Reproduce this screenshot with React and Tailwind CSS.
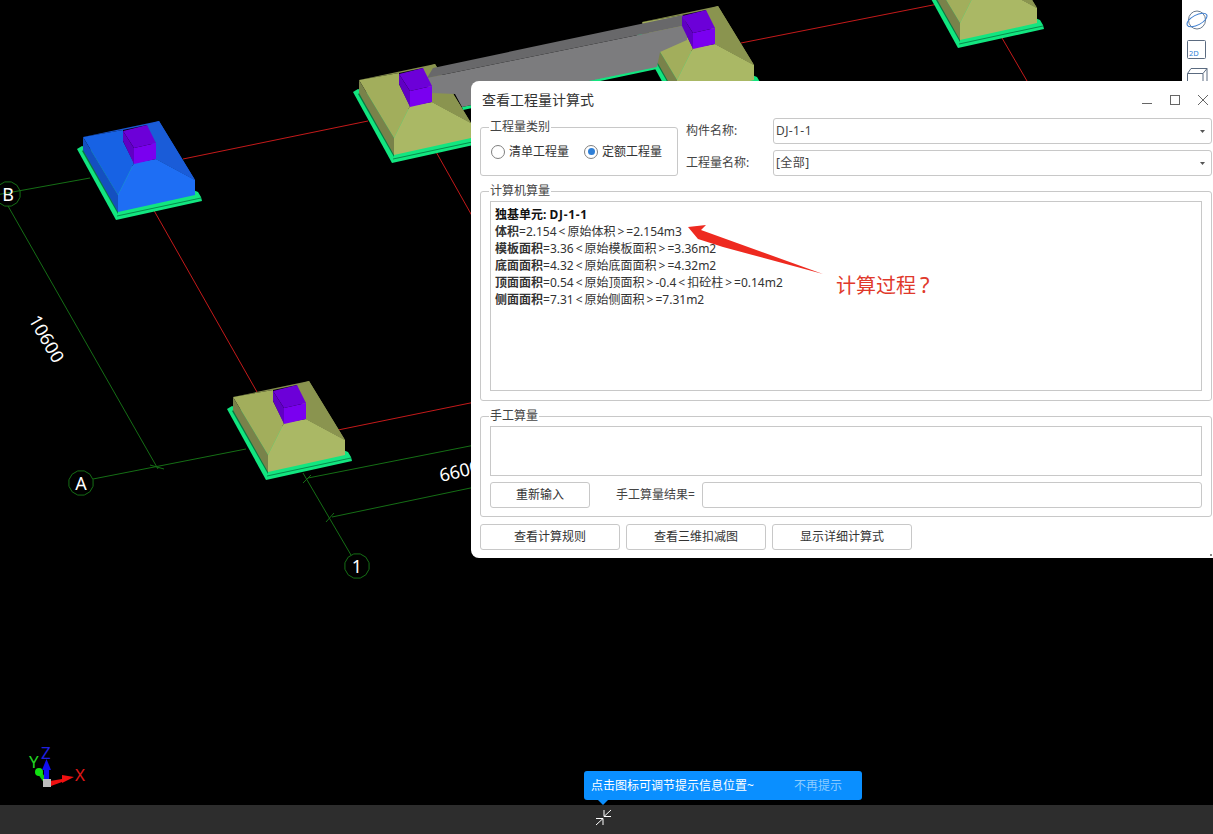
const font = { fontFamily: '"Noto Sans", "Noto Sans CJK SC", sans-serif' };

const BLUE = { back: "#1a58d4", left: "#1762e4", right: "#1a5cd8", front: "#1e6ef4", edge: "#1450c0" };
const OLIVE = { back: "#858e4e", left: "#a2ae5c", right: "#8a944f", front: "#aab865", edge: "#79824a" };

const Plate = ({ x, y }) => (
  <g transform={`translate(${x} ${y})`}>
    <polygon points="77,149 82,146 198,192 201,197 202,201 116,220" fill="#12e680" />
    <polygon points="82,151 85,149 118,208 118,214" fill="#067a42" />
    <polygon points="117,215.5 201,197.5 201,198.5 117,216.5" fill="#088a4c" />
  </g>
);

const Body = ({ x, y, c }) => (
  <g transform={`translate(${x} ${y})`}>
    <polygon points="83,137 159,121 195,180 156,159 147,125 123,130" fill={c.back} />
    <polygon points="83,137 123,130 123,141 134,163 118,195" fill={c.left} />
    <polygon points="147,125 159,121 195,180 156,159" fill={c.right} />
    <polygon points="134,163 156,159 195,180 195,195 118,212 118,195" fill={c.front} />
    <polygon points="83,137 118,195 118,212 83,150" fill={c.edge} />
  </g>
);

const Column = ({ x, y }) => (
  <g transform={`translate(${x} ${y})`}>
    <polygon points="123,131 147,125 156,143 134,148" fill="#6c00d8" />
    <polygon points="123,131 134,148 134,164 123,141" fill="#6000c4" />
    <polygon points="134,148 156,143 156,159 134,164" fill="#7a00f0" />
  </g>
);

const Label = ({ x, y, children }) => {
  const points = Array.from({ length: 12 }, (_, i) => {
    const a = ((i + 0.5) * Math.PI) / 6;
    return `${x + 12.5 * Math.cos(a)},${y + 12.5 * Math.sin(a)}`;
  }).join(" ");
  return (
    <g>
      <polygon points={points} fill="none" stroke="#156e15" />
      <text x={x} y={y + 6.5} fill="#fff" fontSize="18" textAnchor="middle" style={font}>
        {children}
      </text>
    </g>
  );
};

const footings = [
  { x: 0, y: 0, c: BLUE },
  { x: 150, y: 260, c: OLIVE },
  { x: 276, y: -57, c: OLIVE },
  { x: 559, y: -115, c: OLIVE },
  { x: 842, y: -172, c: OLIVE },
];

const Scene = () => (
  <svg width="1213" height="805" className="block">
    {/* axis lines */}
    <g stroke="#c41a1a" strokeWidth="1" fill="none">
      <line x1="152" y1="207" x2="257" y2="392" />
      <line x1="183" y1="159" x2="368" y2="121" />
      <line x1="338" y1="430" x2="480" y2="401" />
      <line x1="435" y1="150" x2="480" y2="230" />
      <line x1="741" y1="43" x2="938" y2="4" />
      <line x1="1002" y1="38" x2="1027" y2="81" />
    </g>
    <g stroke="#156e15" strokeWidth="1" fill="none">
      <line x1="-4" y1="195" x2="90" y2="178" />
      <line x1="93" y1="479" x2="246" y2="449" />
      <line x1="8" y1="206" x2="158" y2="469" />
      <line x1="150" y1="465" x2="164" y2="469" />
      <line x1="308" y1="478" x2="480" y2="444" />
      <line x1="332" y1="517" x2="480" y2="486" />
      <line x1="303" y1="473" x2="351" y2="555" />
      <line x1="303" y1="483" x2="311" y2="475" />
      <line x1="326" y1="522" x2="334" y2="513" />
    </g>
    {footings.map((f) => (
      <Plate key={f.x} x={f.x} y={f.y} />
    ))}
    {footings.map((f) => (
      <Body key={f.x} {...f} />
    ))}
    {/* beam sits over the two footings but under their columns */}
    <polygon points="462,107 657,66 657,69 463,110" fill="#12e680" />
    <polygon points="427,78 687,25 687,40 660,52 657,67 462,107 455,94 432,93" fill="#7c7c7e" />
    <polygon points="433,68 683,15 687,25 427,78" fill="#68686a" />
    {footings.map((f) => (
      <Column key={f.x} x={f.x} y={f.y} />
    ))}
    <Label x={8} y={194}>B</Label>
    <Label x={81} y={483}>A</Label>
    <Label x={357} y={566}>1</Label>
    <text x="0" y="0" fill="#fff" fontSize="18" textAnchor="middle" transform="translate(41 342) rotate(60)" style={font}>
      10600
    </text>
    <text x="0" y="0" fill="#fff" fontSize="18" transform="translate(441 482) rotate(-13)" style={font}>
      6600
    </text>
    {/* xyz gizmo */}
    <g>
      <text x="29" y="768" fill="#22d422" fontSize="17" style={font}>Y</text>
      <text x="41" y="759" fill="#2020e0" fontSize="17" style={font}>Z</text>
      <text x="75" y="781" fill="#e01818" fontSize="17" style={font}>X</text>
      <line x1="46" y1="782" x2="39" y2="772" stroke="#10c810" strokeWidth="4" />
      <circle cx="39" cy="772" r="4" fill="#10e010" />
      <rect x="44" y="765" width="5" height="16" fill="#1010f0" />
      <polygon points="46.5,759 51,770 42,770" fill="#1010f0" />
      <polygon points="50,781 62,779 62,775 74,777 62,783 62,782 51,786" fill="#f01010" />
      <rect x="43" y="779" width="8" height="8" fill="#bdbdbd" />
    </g>
  </svg>
);

const Toolbar = () => (
  <div className="absolute right-0 top-0 h-[81px] w-[31px] bg-white">
    <svg width="31" height="81" fill="none" className="block">
      <ellipse cx="15" cy="20" rx="8.5" ry="9" stroke="#6b7a8c" />
      <ellipse cx="15" cy="20" rx="11" ry="5" stroke="#3f7fd0" transform="rotate(-28 15 20)" />
      <rect x="5.5" y="40.5" width="18" height="18" rx="1" stroke="#5b6b80" />
      <text x="7" y="56" fill="#2f7fd6" fontSize="7.5" style={font}>2D</text>
      <path d="M5.5 81V73.5L9 68.5H25V81M5.5 73.5H21V81M21 73.5L25 68.5" stroke="#5b6b80" />
    </svg>
  </div>
);

const Group = ({ title, className, children }) => (
  <div className={`relative rounded-[3px] border border-[#c8c8c8] ${className}`}>
    <span className="absolute left-[8px] top-[-10px] bg-white px-px text-xs leading-[18px] text-[#444]">{title}</span>
    {children}
  </div>
);

const Radio = ({ checked, children }) => (
  <label className="flex items-center gap-[4px] text-xs text-[#333]">
    <span className="flex size-[14px] items-center justify-center rounded-full border border-[#808080]">
      {checked && <span className="size-[7px] rounded-full bg-[#2f7fd6]" />}
    </span>
    {children}
  </label>
);

const Combo = ({ value }) => (
  <div className="flex h-[26px] flex-1 items-center justify-between rounded-[3px] border border-[#c8c8c8] pl-[2px] pr-[6px] text-xs text-[#444]">
    <span className="tracking-[0.4px]">{value}</span>
    <svg width="5" height="3" className="block">
      <polygon points="0,0 5,0 2.5,3" fill="#555" />
    </svg>
  </div>
);

const Btn = ({ className, children }) => (
  <button className={`h-[26px] rounded-[3px] border border-[#c8c8c8] bg-white text-xs text-[#333] ${className}`}>{children}</button>
);

const rows = [
  ["体积", "=2.154<原始体积>=2.154m3"],
  ["模板面积", "=3.36<原始模板面积>=3.36m2"],
  ["底面面积", "=4.32<原始底面面积>=4.32m2"],
  ["顶面面积", "=0.54<原始顶面积>-0.4<扣砼柱>=0.14m2"],
  ["侧面面积", "=7.31<原始侧面积>=7.31m2"],
];

// the angle brackets have wide side bearings in the reference font
const Formula = ({ text }) =>
  text.split(/([<>])/).map((part, i) =>
    part === "<" || part === ">" ? (
      <span key={i} className="mx-[2px]">
        {part}
      </span>
    ) : (
      part
    )
  );

const Dialog = () => (
  <div className="absolute left-[471px] top-[81px] h-[477px] w-[742px] rounded-l-[8px] bg-white pl-[9px] pr-px" style={font}>
    <div className="flex h-[37px] items-center justify-between">
      <span className="ml-[2px] text-sm text-[#333]">查看工程量计算式</span>
      <svg width="68" height="13" fill="none" stroke="#666" className="mr-[2px] block">
        <path d="M0 10.5H10" />
        <rect x="28.5" y="2.5" width="9" height="9" />
        <path d="M56 2L66 12M66 2L56 12" />
      </svg>
    </div>
    <div className="flex">
      <Group title="工程量类别" className="mt-[9px] flex h-[49px] w-[198px] items-center gap-[15px] pl-[10px]">
        <Radio>清单工程量</Radio>
        <Radio checked>定额工程量</Radio>
      </Group>
      <div className="ml-[8px] flex flex-1 flex-col gap-[6px]">
        <div className="flex items-center">
          <span className="w-[87px] text-xs text-[#444]">构件名称:</span>
          <Combo value="DJ-1-1" />
        </div>
        <div className="flex items-center">
          <span className="w-[87px] text-xs text-[#444]">工程量名称:</span>
          <Combo value="[全部]" />
        </div>
      </div>
    </div>
    <Group title="计算机算量" className="mt-[15px] h-[210px] p-[9px]">
      <div className="h-full border border-[#c8c8c8] px-[4px] pt-[4px] text-xs leading-[17px] text-[#333]">
        <div className="font-bold text-[#111]">
          独基单元: <span className="tracking-[0.7px]">DJ-1-1</span>
        </div>
        {rows.map(([name, text]) => (
          <div key={name}>
            <b className="font-bold">{name}</b>
            <Formula text={text} />
          </div>
        ))}
      </div>
    </Group>
    <Group title="手工算量" className="mt-[15px] h-[101px] px-[9px] pt-[9px]">
      <div className="h-[50px] border border-[#c8c8c8]" />
      <div className="mt-[6px] flex items-center">
        <Btn className="w-[100px]">重新输入</Btn>
        <span className="ml-[26px] w-[86px] text-xs text-[#444]">手工算量结果=</span>
        <div className="h-[26px] flex-1 rounded-[3px] border border-[#c8c8c8]" />
      </div>
    </Group>
    <div className="mt-[7px] flex gap-[6px]">
      <Btn className="w-[140px]">查看计算规则</Btn>
      <Btn className="w-[140px]">查看三维扣减图</Btn>
      <Btn className="w-[140px]">显示详细计算式</Btn>
    </div>
    <span className="absolute bottom-[2px] right-px size-[2px] bg-[#888]" />
  </div>
);

const Annotation = () => (
  <>
    <svg width="140" height="60" className="absolute left-[686px] top-[220px] block">
      <polygon points="2,7 20,5 15,10 137,54 37,27 12,19" fill="#ee2a20" />
    </svg>
    <span className="absolute left-[836px] top-[269px] text-xl leading-[30px] text-[#e0392b]" style={font}>
      计算过程<span className="ml-[4px] text-[22px]">?</span>
    </span>
  </>
);

const App = () => (
  <div className="relative flex h-[834px] w-[1213px] flex-col overflow-hidden bg-black">
    <div className="flex-1">
      <Scene />
    </div>
    <div className="flex h-[29px] justify-center bg-[#2d2d2d] pr-[7px]">
      <svg width="17" height="17" fill="none" stroke="#fff" className="mt-[4px] block">
        <path d="M16 1L9 7.5M9 1V7.5H16M1 16L8 9.5M1 9.5H8V16" />
      </svg>
    </div>
    <Toolbar />
    <Dialog />
    <Annotation />
    <div className="absolute left-[584px] top-[771px] flex h-[29px] w-[278px] items-center rounded-[3px] bg-[#0a8fff] pl-[7px] text-xs text-white" style={font}>
      点击图标可调节提示信息位置~
      <span className="ml-[40px] text-[#8cccff]">不再提示</span>
      <span className="absolute left-[14px] top-[29px] size-0 border-x-[5px] border-t-[5px] border-x-transparent border-t-[#0a8fff]" />
    </div>
  </div>
);

export default App;
